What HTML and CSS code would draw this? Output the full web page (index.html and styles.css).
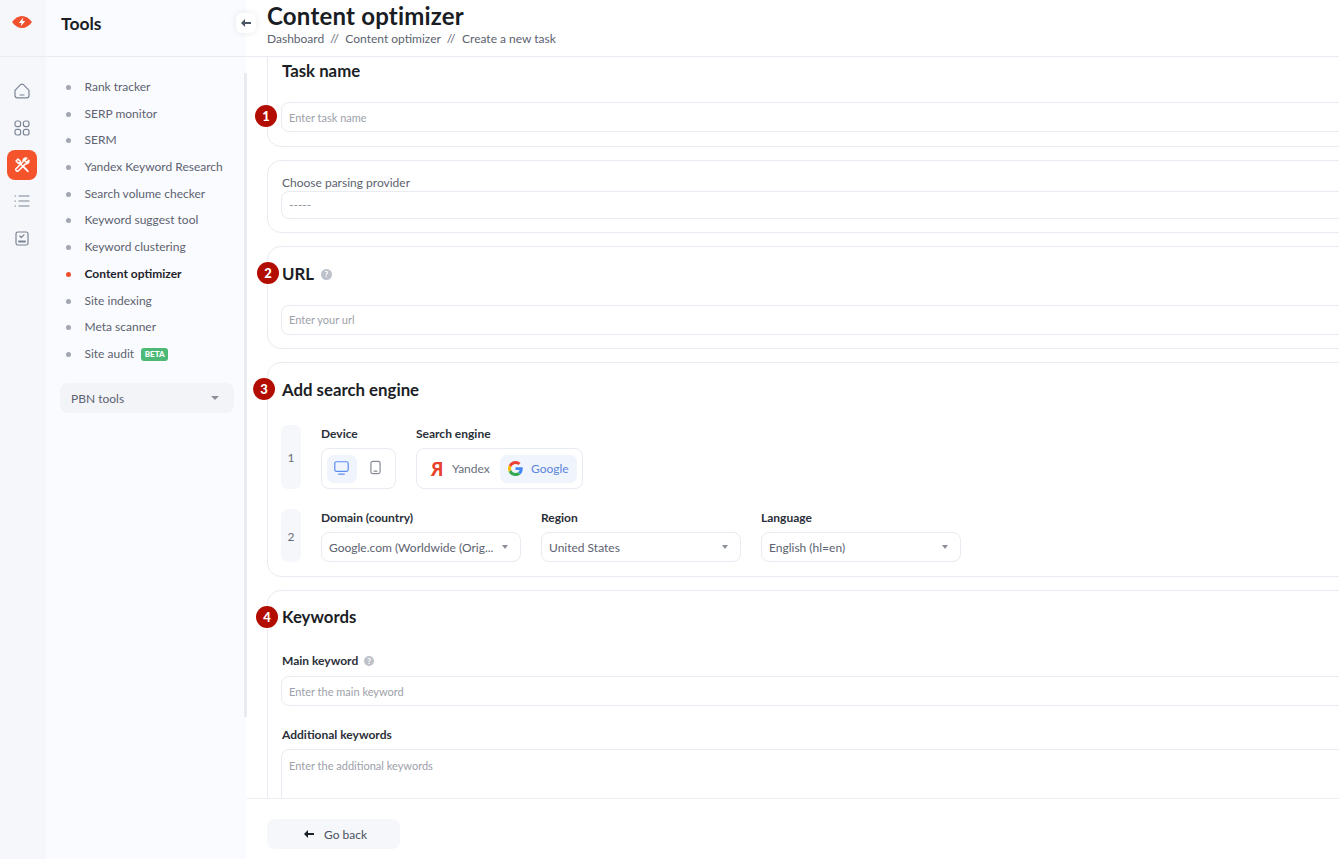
FILE: index.html
```html
<!DOCTYPE html>
<html lang="en">
<head>
<meta charset="utf-8">
<title>Content optimizer</title>
<link rel="stylesheet" href="styles.css">
</head>
<body>
<div class="app">
  <nav class="rail">
    <div class="rail-logo">
      <svg width="20" height="12" viewBox="0 0 20 12"><path d="M0 6C3 2 6.500 0 10 0s7 2 10 6c-3 4-6.500 6-10 6S3 10 0 6z" fill="#f0502c"/><path d="M11.300 1.500L6.800 7h2.700l-.8 3.500L13.200 5h-2.700z" fill="#fff"/></svg>
    </div>
    <div class="rail-icons">
      <a class="rail-btn"><svg width="16" height="16" viewBox="0 0 16 16" fill="none" stroke="#7d8594" stroke-width="1.200" stroke-linejoin="round" stroke-linecap="round"><path d="M1 7.300L6.300 1.900c1-1 2.400-1 3.400 0L15 7.300v5.200c0 1.400-1 2.400-2.400 2.400H3.400C2 14.900 1 13.900 1 12.500z"/><path d="M6 12h4"/></svg></a>
      <a class="rail-btn"><svg width="16" height="16" viewBox="0 0 16 16" fill="none" stroke="#7d8594" stroke-width="1.200"><rect x="1" y="1" width="5.600" height="5.600" rx="2"/><rect x="9.400" y="1" width="5.600" height="5.600" rx="2"/><rect x="1" y="9.400" width="5.600" height="5.600" rx="2"/><rect x="9.400" y="9.400" width="5.600" height="5.600" rx="2"/></svg></a>
      <a class="rail-btn active"><svg width="16" height="16" viewBox="0 0 16 16" fill="none" stroke="#fff" stroke-width="1.500" stroke-linecap="round" stroke-linejoin="round"><path d="M2 4l2-2 2.500 2.500-.5 1.500-1.500.5z"/><path d="M5 5.500l9 9"/><path d="M9.500 9.500l3.500 3.500"/><path d="M14.800 3.200l-2.300 2.300-2-2 2.300-2.300c-2.300-.6-4.200 1.200-3.700 3.500L2 11.800c-1 1 1.200 3.200 2.200 2.200l7.200-7.100c2.200.5 4-1.400 3.400-3.700z"/></svg></a>
      <a class="rail-btn"><svg width="16" height="14" viewBox="0 0 16 14" fill="none" stroke="#7d8594" stroke-width="1.200" stroke-linecap="round"><path d="M5 2h10M5 7h10M5 12h10"/><path d="M1 2h.5M1 7h.5M1 12h.5"/></svg></a>
      <a class="rail-btn"><svg width="14" height="15" viewBox="0 0 14 15" fill="none" stroke="#7d8594" stroke-width="1.200" stroke-linecap="round" stroke-linejoin="round"><rect x="1" y="1" width="12" height="13" rx="1.800"/><path d="M4.800 5l1.500 1.500L9 3.800"/><path d="M4 10.500h6" stroke-width="2"/></svg></a>
    </div>
  </nav>

  <aside class="side">
    <div class="side-head">Tools</div>
    <div class="side-body">
      <ul class="menu">
        <li>Rank tracker</li>
        <li>SERP monitor</li>
        <li>SERM</li>
        <li>Yandex Keyword Research</li>
        <li>Search volume checker</li>
        <li>Keyword suggest tool</li>
        <li>Keyword clustering</li>
        <li class="current">Content optimizer</li>
        <li>Site indexing</li>
        <li>Meta scanner</li>
        <li>Site audit <span class="beta">BETA</span></li>
      </ul>
      <div class="pbn"><span>PBN tools</span><i class="caret caret-big"></i></div>
    </div>
    <div class="side-scroll"></div>
    <button class="collapse" type="button" aria-label="Collapse"><svg width="10" height="8" viewBox="0 0 10 8"><path d="M4 0v3h6v2H4v3L0 4z" fill="#4d5665"/></svg></button>
  </aside>

  <main class="main">
    <header class="top">
      <h1>Content optimizer</h1>
      <div class="crumbs"><span>Dashboard</span><em>//</em><span>Content optimizer</span><em>//</em><span>Create a new task</span></div>
    </header>
    <div class="content">
      <section class="card card-task">
        <b class="step step-1">1</b>
        <h2>Task name</h2>
        <div class="field"><span class="ph">Enter task name</span></div>
      </section>

      <section class="card card-provider">
        <div class="plain-label">Choose parsing provider</div>
        <div class="field field-short"><span class="ph dash">-----</span></div>
      </section>

      <section class="card card-url">
        <b class="step step-2">2</b>
        <h2 class="with-help">URL <i class="help">?</i></h2>
        <div class="field"><span class="ph">Enter your url</span></div>
      </section>

      <section class="card card-engine">
        <b class="step step-3">3</b>
        <h2>Add search engine</h2>
        <div class="engine-row row-1">
          <div class="num">1</div>
          <div class="group">
            <label>Device</label>
            <div class="seg seg-device">
              <span class="seg-item on"><svg width="15" height="14" viewBox="0 0 16 15" fill="none" stroke="#5a8def" stroke-width="1.300" stroke-linecap="round"><rect x=".8" y=".8" width="14.400" height="10.400" rx="2"/><path d="M5 14h6"/></svg></span>
              <span class="seg-item"><svg width="11" height="15" viewBox="0 0 12 15" fill="none" stroke="#858b96" stroke-width="1.300" stroke-linecap="round"><rect x="1" y=".8" width="10" height="13.400" rx="2"/><path d="M4.500 11.500h3"/></svg></span>
            </div>
          </div>
          <div class="group">
            <label>Search engine</label>
            <div class="seg seg-engine">
              <span class="eng eng-ya"><b class="ya">Я</b>Yandex</span>
              <span class="eng on"><svg width="15" height="15" viewBox="0 0 48 48"><path fill="#ea4335" d="M24 9.500c3.500 0 6.700 1.200 9.200 3.600l6.900-6.900C35.900 2.400 30.500 0 24 0 14.600 0 6.500 5.400 2.600 13.200l8 6.200C12.500 13.700 17.800 9.500 24 9.500z"/><path fill="#4285f4" d="M47 24.500c0-1.600-.1-3.100-.4-4.500H24v9h13c-.6 3-2.300 5.500-4.800 7.200l7.700 6c4.500-4.200 7.100-10.300 7.100-17.700z"/><path fill="#fbbc05" d="M10.500 28.600c-.5-1.400-.8-3-.8-4.600s.3-3.200.8-4.600l-8-6.200C.9 16.500 0 20.100 0 24s.9 7.500 2.600 10.800z"/><path fill="#34a853" d="M24 48c6.500 0 11.900-2.100 15.900-5.800l-7.700-6c-2.200 1.500-4.900 2.300-8.200 2.300-6.200 0-11.500-4.200-13.400-9.900l-8 6.200C6.500 42.600 14.600 48 24 48z"/></svg>Google</span>
            </div>
          </div>
        </div>
        <div class="engine-row row-2">
          <div class="num">2</div>
          <div class="group">
            <label>Domain (country)</label>
            <div class="select"><span>Google.com (Worldwide (Orig...</span><i class="caret"></i></div>
          </div>
          <div class="group">
            <label>Region</label>
            <div class="select"><span>United States</span><i class="caret"></i></div>
          </div>
          <div class="group">
            <label>Language</label>
            <div class="select"><span>English (hl=en)</span><i class="caret"></i></div>
          </div>
        </div>
      </section>

      <section class="card card-keys">
        <b class="step step-4">4</b>
        <h2>Keywords</h2>
        <label class="key-label">Main keyword <i class="help help-small">?</i></label>
        <div class="field"><span class="ph">Enter the main keyword</span></div>
        <label class="key-label second">Additional keywords</label>
        <div class="field area"><span class="ph">Enter the additional keywords</span></div>
      </section>
    </div>
    <footer class="foot">
      <button class="back" type="button"><svg width="10" height="8" viewBox="0 0 10 8"><path d="M4 0v3h6v2H4v3L0 4z" fill="#1d2129"/></svg>Go back</button>
    </footer>
  </main>
</div>
</body>
</html>
```
FILE: styles.css
```css
* { box-sizing: border-box; }
html, body { margin: 0; height: 100%; overflow: hidden; }
body { font-family: Lato, "Open Sans", sans-serif; font-size: 12px; color: #1c2027; background: #fff; }
.app { display: flex; width: 1339px; height: 859px; }

.rail { width: 46px; flex: none; background: #f5f7fb; padding-right: 2px; }
.rail-logo { height: 57px; margin-right: -2px; padding-right: 2px; display: flex; align-items: center; justify-content: center; padding-bottom: 13px; border-bottom: 1px solid #e8ebf1; }
.rail-icons { display: flex; flex-direction: column; align-items: center; padding-top: 19px; }
.rail-btn { width: 30px; height: 30px; margin-bottom: 6.800px; display: flex; align-items: center; justify-content: center; border-radius: 8px; }
.rail-btn.active { background: #f4532c; }

.side { width: 200px; flex: none; background: #fafbfe; position: relative; }
.side-head { height: 57px; border-bottom: 1px solid #e8ebf1; padding: 13px 0 0 15px; font-size: 17.500px; line-height: 22px; font-weight: 700; color: #1b1e25; }
.side-body { padding: 17px 12px 0 14px; }
.menu { list-style: none; margin: 0; padding: 0; }
.menu li { height: 26.700px; line-height: 26.700px; padding-left: 24.500px; position: relative; color: #5c6270; font-size: 12px; white-space: nowrap; }
.menu li::before { content: ""; position: absolute; left: 6px; top: 11px; width: 5px; height: 5px; border-radius: 50%; background: #a1a6b1; }
.menu li.current { color: #1f232c; font-weight: 700; }
.menu li.current::before { background: #ee4f2c; }
.beta { display: inline-block; background: #4cb976; color: #fff; font-size: 8px; font-weight: 900; line-height: 12px; height: 13px; padding: 0 3.500px; border-radius: 3px; margin-left: 4px; vertical-align: 1px; letter-spacing: .1px; }
.pbn { margin-top: 15px; height: 30px; background: #f2f4f8; border-radius: 8px; display: flex; align-items: center; justify-content: space-between; padding: 1px 15px 0 11px; color: #5c6270; font-size: 12px; }
.caret { width: 0; height: 0; border-left: 3.500px solid transparent; border-right: 3.500px solid transparent; border-top: 4px solid #8a8f9a; display: block; }
.caret-big { border-left-width: 4px; border-right-width: 4px; }
.side-scroll { position: absolute; left: 198px; top: 73px; width: 3px; height: 644px; background: #e8ebf2; }
.collapse { position: absolute; left: 190px; top: 13px; width: 20px; height: 20px; border: 0; padding: 0; background: #fff; border-radius: 6px; box-shadow: 0 0 6px rgba(40, 50, 80, .1); display: flex; align-items: center; justify-content: center; z-index: 2; }

.main { flex: 1; min-width: 0; display: flex; flex-direction: column; background: #fff; }
.top { height: 57px; flex: none; border-bottom: 1px solid #e8ebf1; padding: 2px 0 0 21px; }
.top h1 { margin: 0; font-size: 24px; line-height: 28px; font-weight: 700; color: #1a1d24; letter-spacing: .2px; }
.crumbs { font-size: 12px; line-height: 16px; color: #5c6270; display: flex; gap: 6px; margin-top: 1px; }
.crumbs em { font-style: normal; letter-spacing: .5px; }

.content { flex: 1; min-height: 0; overflow: hidden; padding-left: 21px; }
.card { position: relative; width: 1200px; border: 1px solid #e8ebf1; border-radius: 14px; margin-bottom: 13px; padding: 0 0 0 13px; background: #fff; }
.card h2 { margin: 0 0 0 1px; font-size: 16.800px; line-height: 22px; font-weight: 700; color: #1b1e25; }
.step { position: absolute; width: 22px; height: 22px; border-radius: 50%; background: #b30c00; color: #fff; font-size: 13px; font-weight: 900; line-height: 22px; text-align: center; }

.field { height: 30px; border: 1px solid #e8ebf1; border-radius: 8px; display: flex; align-items: center; padding: 0 7px; background: #fff; }
.field.area { height: 100px; align-items: flex-start; padding-top: 9px; }
.ph { color: #9da1aa; font-size: 11px; }

.card-task { height: 105px; margin-top: -15px; padding-top: 17px; }
.card-task .field { margin-top: 20px; }
.step-1 { left: -13px; top: 62px; }
.card-provider { height: 73px; padding-top: 14px; }
.plain-label { margin-left: 1px; font-size: 12px; line-height: 15px; color: #5c6270; margin-bottom: 1px; }
.field-short { height: 28px; }
.field-short .ph { font-size: 12px; color: #8a8f9a; margin-top: -2px; }
.card-url { height: 103px; padding-top: 16px; }
.with-help { display: flex; align-items: center; gap: 7px; }
.card-url .field { margin-top: 20px; padding-bottom: 2px; }
.help { display: inline-flex; width: 11px; height: 11px; border-radius: 50%; background: #bcc1ca; color: #fff; font-size: 8px; font-style: normal; font-weight: 900; align-items: center; justify-content: center; line-height: 1; }
.step-2 { left: -11px; top: 15px; }
.card-engine { height: 215px; padding-top: 16px; }
.step-3 { left: -15px; top: 15px; }
.engine-row { display: flex; }
.row-1 { margin-top: 24px; gap: 20px; }
.row-2 { margin-top: 20px; gap: 20px; }
.num { width: 20px; height: 64px; background: #f5f7fb; border-radius: 7px; display: flex; align-items: center; justify-content: center; color: #6a6f7b; font-size: 12px; padding-top: 1px; }
.row-2 .num { height: 53px; }
.group label { display: block; font-size: 12px; line-height: 15px; font-weight: 700; color: #2b2f38; margin-top: 1px; }
.seg { margin-top: 7px; height: 41px; border: 1px solid #e8ebf1; border-radius: 8px; display: flex; align-items: center; padding: 0 5px; background: #fff; }
.seg-device { width: 75px; gap: 4px; }
.seg-engine { width: 167px; }
.seg-item { width: 30px; height: 28px; border-radius: 7px; display: flex; align-items: center; justify-content: center; }
.seg-item svg { margin-top: -2px; }
.seg-item.on, .eng.on { background: #f0f4fc; }
.eng { height: 28px; display: flex; align-items: center; border-radius: 7px; font-size: 12px; color: #6a6f7b; white-space: nowrap; flex: none; }
.eng-ya { width: 78px; padding-left: 9px; }
.eng.on { width: 77px; color: #5a86dc; gap: 8px; padding-left: 8px; }
.ya { color: #e8402a; font-size: 18px; font-weight: 900; width: 21px; }
.select { margin-top: 7px; width: 200px; height: 30px; border: 1px solid #e8ebf1; border-radius: 8px; display: flex; align-items: center; justify-content: space-between; padding: 0 12px 0 7px; color: #5c6270; font-size: 12px; white-space: nowrap; background: #fff; }

.card-keys { height: 300px; padding-top: 15px; }
.step-4 { left: -12px; top: 15px; }
.key-label { display: flex; align-items: center; gap: 6px; margin-left: 1px; font-size: 12px; line-height: 15px; font-weight: 700; color: #2b2f38; margin-top: 25px; margin-bottom: 8px; }
.key-label.second { margin-top: 21px; margin-bottom: 7px; }
.help-small { width: 10px; height: 10px; }

.foot { height: 61px; flex: none; border-top: 1px solid #eef0f5; padding: 20px 0 0 21px; background: #fff; }
.back { width: 133px; height: 30px; background: #f5f7fb; border: 0; border-radius: 8px; font: 12px Lato, sans-serif; color: #4b515d; display: flex; align-items: center; justify-content: center; gap: 10px; padding: 0 0 0 4px; }
```
